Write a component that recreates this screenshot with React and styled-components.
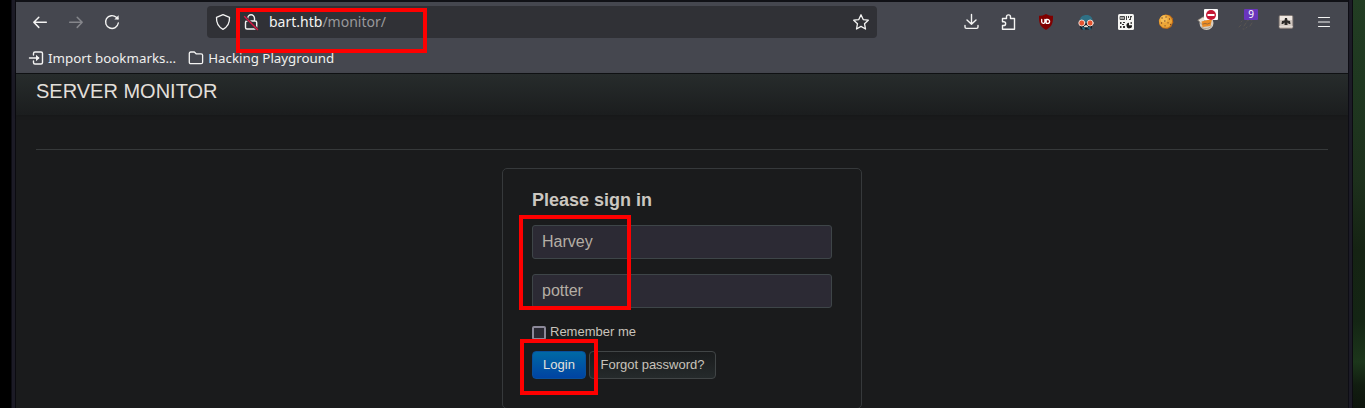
import React from "react";
import styled, { createGlobalStyle } from "styled-components";

const GlobalStyle = createGlobalStyle`
  * { box-sizing: border-box; }
  body { margin: 0; background: #000; overflow: hidden; }
`;

const Desktop = styled.div`
  position: relative;
  display: flex;
  width: 1365px;
  height: 408px;
  overflow: hidden;
  background: #000;
`;

const DesktopLeft = styled.div`
  flex: 0 0 11px;
  background: #000;
`;

const DesktopRight = styled.div`
  flex: 0 0 12px;
  background: linear-gradient(#223d23 0, #1f3820 80px, #1d301c 180px, #152313 250px, #142514 320px, #1c361b 362px, #111d10 385px, #0e150d 408px);
`;

const Frame = styled.div`
  flex: 0 0 ${(p) => p.$width}px;
  background: #1c1b26;
  border-left: 1px solid #0d0d14;
  border-right: 1px solid #0b0b10;
`;

const Browser = styled.div`
  flex: 0 0 1332px;
  display: flex;
  flex-direction: column;
  border-top: 2px solid #101116;
  background: #1a1b1c;
`;

const Toolbar = styled.header`
  display: flex;
  align-items: center;
  flex: none;
  height: 40px;
  padding: 0 16px;
  background: #45474f;
`;

const IconGroup = styled.div`
  display: flex;
  align-items: center;
  gap: ${(p) => p.$gap}px;
`;

const Icon = styled.svg`
  flex: none;
  display: block;
  width: ${(p) => p.$size || 16}px;
  height: ${(p) => p.$size || 16}px;
  overflow: visible;
  fill: none;
  stroke: ${(p) => p.$color || "#f4f4f3"};
  stroke-width: ${(p) => p.$weight || 1.3};
  stroke-linecap: round;
  stroke-linejoin: round;
`;

const AddressBar = styled.div`
  display: flex;
  align-items: center;
  width: 670px;
  height: 32px;
  margin-left: 87px;
  padding: 0 8px;
  border-radius: 4px;
  background: #303136;
`;

const Address = styled.div`
  flex: 1;
  margin-left: 10px;
  color: #98989b;
  font: 14px/20px "Noto Sans", sans-serif;
`;

const Host = styled.span`
  color: #f3f3f1;
`;

const Actions = styled.div`
  display: flex;
  align-items: center;
  margin-left: auto;
`;

const Extensions = styled(IconGroup)`
  margin: 0 22px;
`;

const Extension = styled.div`
  position: relative;
  width: 16px;
  height: 16px;
`;

const Badge = styled.span`
  position: absolute;
  left: 6px;
  top: -5px;
  display: flex;
  align-items: center;
  justify-content: center;
  width: 14px;
  height: 11px;
  border-radius: 1px;
  background: ${(p) => p.$color};
  color: #fff;
  font: 10px/11px "Noto Sans", sans-serif;
`;

const Bookmarks = styled.nav`
  display: flex;
  flex: none;
  height: 32px;
  padding: 3px 12px 0;
  gap: 12px;
  align-items: flex-start;
  background: #45474f;
  border-bottom: 1px solid #101214;
`;

const Bookmark = styled.div`
  display: flex;
  align-items: center;
  gap: 4px;
  height: 26px;
  color: #efefed;
  font: 13.33px/20px "Noto Sans", sans-serif;
  white-space: nowrap;
`;

const PageHeader = styled.div`
  flex: none;
  height: 41px;
  padding: 7px 20px;
  background: linear-gradient(#272c2c, #1b1d1e);
  box-shadow: 0 1px 4px rgba(0, 0, 0, 0.16);
`;

const Brand = styled.div`
  color: #e2dfda;
  font: 20px/20px "Liberation Sans", Arial, sans-serif;
`;

const Page = styled.main`
  flex: 1;
  padding: 34px 20px 0;
`;

const Rule = styled.hr`
  margin: 0 0 18px;
  border: 0;
  border-top: 1px solid #36393a;
`;

const SignIn = styled.form`
  display: flex;
  flex-direction: column;
  width: 360px;
  height: 241px;
  margin: 0 auto;
  padding: 20px 29px 29px;
  border: 1px solid #36393b;
  border-radius: 5px;
  background: #1a1b1c;
  font-family: "Liberation Sans", Arial, sans-serif;
`;

const Title = styled.h2`
  margin: 0 0 14px;
  color: #cbc7c0;
  font-size: 18px;
  line-height: 22px;
`;

const Field = styled.input`
  width: 300px;
  height: 34px;
  margin: 0 0 15px;
  padding: 0 9px;
  border: 1px solid #3e4548;
  border-radius: 3px;
  outline: 0;
  background: #2c2a34;
  color: #b5aea5;
  font: 16px/20px "Liberation Sans", Arial, sans-serif;
`;

const Remember = styled.label`
  display: flex;
  align-items: center;
  gap: 4px;
  height: 20px;
  margin: -1px 0 9px;
  color: #c8c3bb;
  font-size: 13px;
  line-height: 20px;
`;

const Checkbox = styled.input`
  appearance: none;
  width: 14px;
  height: 14px;
  margin: 2px 0 0;
  border: 2px solid #8c8999;
  border-radius: 2px;
  background: #2b2a33;
`;

const Buttons = styled.div`
  display: flex;
  gap: 3px;
`;

const Button = styled.button`
  width: ${(p) => p.$width}px;
  height: 28px;
  padding: 0;
  border: 1px solid ${(p) => (p.$primary ? "#084f9b" : "#414546")};
  border-radius: 4px;
  background: ${(p) => (p.$primary ? "linear-gradient(#0069a5, #0043a2)" : "linear-gradient(#1a1c1d, #252a2b)")};
  color: ${(p) => (p.$primary ? "#e2e1dd" : "#c8c3bb")};
  font: 13px/18px "Liberation Sans", Arial, sans-serif;
`;

const Highlight = styled.div`
  position: absolute;
  left: ${(p) => p.$x}px;
  top: ${(p) => p.$y}px;
  width: ${(p) => p.$w}px;
  height: ${(p) => p.$h}px;
  border: 4px solid #fe0000;
`;

const BlockerIcon = () => (
  <Icon viewBox="0 0 16 16" $color="none">
    <path d="M8 0C6 1.400 3.500 1.800 1 1.800c0 7 .3 10.400 7 14.200 6.700-3.800 7-7.200 7-14.200C12.500 1.800 10 1.400 8 0z" fill="#800000" />
    <path d="M3.700 5.500v2.300c0 2 3.200 2 3.200 0V5.500M8.200 5.500v3.800h1.300c2.800 0 2.800-3.800 0-3.800z" stroke="#fff" strokeWidth="1.300" />
  </Icon>
);

const SpyIcon = () => (
  <Icon viewBox="0 0 16 16" $color="none">
    <path d="M1.500 7C2 3 4.500 1 8.500 1c4 0 6 2.500 6 6L8 8.500z" fill="#2f7085" />
    <path d="M3 9h10l1 4-1 2.500H3L2 13z" fill="#111c26" />
    <path d="M6 12.300l2-1.200 2 1.200v1H6z" fill="#e9e3da" />
    <path d="M4.500 14H6v1.500M10 14h2v1.500" stroke="#2c7086" />
    <circle cx="3.800" cy="9" r="3" fill="#e4532f" stroke="#f4e5dc" strokeWidth=".9" />
    <circle cx="12.200" cy="9" r="3" fill="#e4532f" stroke="#f4e5dc" strokeWidth=".9" />
  </Icon>
);

const CodeIcon = () => (
  <Icon viewBox="0 0 16 16" $color="none">
    <rect width="16" height="16" rx="1.500" fill="#f4f4f2" />
    <path d="M2.500 2.500h4v3h-4zM3.500 4h2" stroke="#333" strokeWidth=".9" strokeLinejoin="miter" />
    <path d="M8 2h1v4H8zM10 2h1v2h-1zM12 2h2v1.200h-1V6h-2V5h1z" fill="#444" />
    <path d="M2 8h1.500v2H2zM5 8h2v1H5zM2 12h1.500v2H2zM4 10h2v1H4zM5 12h2v2H5z" fill="#333" />
    <path d="M11 8.800v2.400h3a2.800 2.800 0 1 1-3-2.400zM12.500 8.200h1.500v1.500h-1.500z" fill="#1b1b1b" />
  </Icon>
);

const CookieIcon = () => (
  <Icon viewBox="0 0 16 16" $color="none">
    <path d="M5 1.200l3-.7 4 .8 2.700 3 .5 4-2 4.700-4 2-4.700-.7L1.400 11 .8 6.500l1.900-3z" fill="#bd6b19" />
    <circle cx="7.500" cy="7.300" r="6.500" fill="#eda638" />
    <circle cx="6" cy="5" r="3.500" fill="#f5bd55" />
    <path d="M4 4h.1M8 3h.1M11.500 5h.1M6.800 7h.1M3.500 9h.1M10 8.800h.1M7 11.800h.1M12.500 10.500h.1" stroke="#794622" strokeWidth="1.300" />
  </Icon>
);

const JarIcon = () => (
  <Icon viewBox="0 0 16 16" $color="none">
    <circle cx="8.500" cy="9" r="7" fill="#d7cec1" />
    <path d="M0 6l5-3 3 2-4 5z" fill="#e5dfd4" stroke="#8d8170" strokeWidth=".6" />
    <path d="M3.500 7.500L14 5l-1.500 7-8 1z" fill="#ed8d25" />
    <path d="M5 10l2-.5 2.500.5 2.500-1" stroke="#775c42" strokeWidth=".7" />
    <path d="M2.500 12.500c3 3 8 3 11-.5" stroke="#a09586" strokeWidth=".8" />
  </Icon>
);

const PawsIcon = () => (
  <Icon viewBox="0 0 16 16" $color="#595552" $weight="1">
    <path d="M1 13l2-2M3 8l1-1M6 12l2-3M8 14l1-1M9 7l2-1M12 12l2-3M5 15h1M13 6h1" />
  </Icon>
);

const PortraitIcon = () => (
  <Icon viewBox="0 0 16 16" $color="none">
    <rect x="1.200" y="1.700" width="13.600" height="12.600" rx="1" fill="#d0c7c0" stroke="#91857f" strokeWidth=".8" />
    <path d="M2 2h12v4H2z" fill="#eee7e1" />
    <path d="M7 4h2l.5 2.500L12 7l.5 3H11L9.500 8.500V11h-3V8.500L5 10H3.500L4 7l2.500-.5z" fill="#2c2a28" />
    <path d="M2 12.500h12" stroke="#e5ddd6" />
  </Icon>
);

export default function App() {
  return (
    <>
      <GlobalStyle />
      <Desktop>
        <DesktopLeft />
        <Frame $width={5} />
        <Browser>
          <Toolbar>
            <IconGroup $gap={20}>
              <Icon viewBox="0 0 16 16" $weight={1.5}><path d="M14.300 8.300H1.800M6.800 3.200l-5 5.100 5 5.100" /></Icon>
              <Icon viewBox="0 0 16 16" $color="#85868b" $weight={1.5}><path d="M1.700 8.300h12.500M9.200 3.200l5 5.100-5 5.100" /></Icon>
              <Icon viewBox="0 0 16 16" $weight={1.4}>
                <path d="M14.300 9a6.400 6.400 0 1 1-2-5.700l1.600 1.500" />
                <path d="M14.600 1.300v4.300h-4.300z" fill="#f4f4f3" stroke="none" />
              </Icon>
            </IconGroup>
            <AddressBar>
              <IconGroup $gap={12}>
                <Icon viewBox="0 0 16 16"><path d="M8 .7l6.500 2.700c.3 5.500-1.700 9.400-6.500 11.900C3.200 12.800 1.200 8.900 1.500 3.400z" /></Icon>
                <Icon viewBox="0 0 16 16" $weight={1.4}>
                  <path d="M4.700 7V4.300C4.700-.4 11.500-.4 11.500 4.300V7M4 7h8.200c1 0 1.500.5 1.500 1.500v5c0 1-.5 1.500-1.500 1.500H4c-1 0-1.500-.5-1.500-1.500v-5C2.500 7.500 3 7 4 7z" />
                  <path d="M1.500 2.500l13 13" stroke="#303136" strokeWidth="2.800" />
                  <path d="M1.500 2.500l13 13" stroke="#dd1745" strokeWidth="1.400" />
                </Icon>
              </IconGroup>
              <Address><Host>bart.htb</Host>/monitor/</Address>
              <Icon viewBox="0 0 16 16"><path d="M8 .8l2.200 4.800 5.100.6-3.800 3.500 1 5.300L8 12.400 3.500 15l1-5.300L.7 6.200l5.100-.6z" /></Icon>
            </AddressBar>
            <Actions>
              <IconGroup $gap={21}>
                <Icon viewBox="0 0 16 16" $weight={1.4}><path d="M8.500.5v9.700M4 6l4.500 4.300L13 6M2 11.500V13c0 1 .5 1.400 1.400 1.400h10.200c.9 0 1.400-.4 1.400-1.400v-1.500" /></Icon>
                <Icon viewBox="0 0 16 16" $weight={1.4}><path d="M2.500 4.500h4V2.800C6.500.2 10.500.2 10.500 2.800v1.700h4v10.800h-12v-3.800h1.200c2.600 0 2.600-3.700 0-3.700H2.500z" /></Icon>
              </IconGroup>
              <Extensions $gap={24}>
                <BlockerIcon />
                <SpyIcon />
                <CodeIcon />
                <CookieIcon />
                <Extension>
                  <JarIcon />
                  <Badge $color="#fff">
                    <Icon viewBox="0 0 10 10" $size={10} $color="none">
                      <circle cx="5" cy="5" r="5" fill="#c51835" />
                      <path d="M1.500 5h7" stroke="#fff" strokeWidth="2" strokeLinecap="butt" />
                    </Icon>
                  </Badge>
                </Extension>
                <Extension><PawsIcon /><Badge $color="#6935bc">9</Badge></Extension>
                <PortraitIcon />
              </Extensions>
              <Icon viewBox="0 0 16 16" $weight={1.2}><path d="M2.500 3.500h11M2.500 8h11M2.500 12.500h11" /></Icon>
            </Actions>
          </Toolbar>
          <Bookmarks>
            <Bookmark>
              <Icon viewBox="0 0 16 16" $weight={1.4}>
                <path d="M5.500 5V3.500c0-1 .5-1.500 1.500-1.500h6c1 0 1.500.5 1.500 1.500v9c0 1-.5 1.500-1.500 1.500H7c-1 0-1.500-.5-1.500-1.500V11M1.500 8h9" />
                <path d="M8 4.800L11.500 8 8 11.200z" fill="#f4f4f3" stroke="none" />
              </Icon>
              Import bookmarks...
            </Bookmark>
            <Bookmark>
              <Icon viewBox="0 0 16 16"><path d="M1.300 12.200V3.500c0-1 .5-1.500 1.500-1.500h3.500l1.800 1.800h5c1 0 1.500.5 1.500 1.500v6.900c0 1-.5 1.500-1.500 1.500H2.800c-1 0-1.500-.5-1.500-1.500z" /></Icon>
              Hacking Playground
            </Bookmark>
          </Bookmarks>
          <PageHeader><Brand>SERVER MONITOR</Brand></PageHeader>
          <Page>
            <Rule />
            <SignIn>
              <Title>Please sign in</Title>
              <Field defaultValue="Harvey" />
              <Field defaultValue="potter" />
              <Remember><Checkbox type="checkbox" />Remember me</Remember>
              <Buttons>
                <Button type="button" $primary $width={54}>Login</Button>
                <Button type="button" $width={127}>Forgot password?</Button>
              </Buttons>
            </SignIn>
          </Page>
        </Browser>
        <Frame $width={5} />
        <DesktopRight />
        <Highlight $x={236} $y={8} $w={191} $h={45} />
        <Highlight $x={519} $y={215} $w={112} $h={95} />
        <Highlight $x={520} $y={339} $w={78} $h={56} />
      </Desktop>
    </>
  );
}
